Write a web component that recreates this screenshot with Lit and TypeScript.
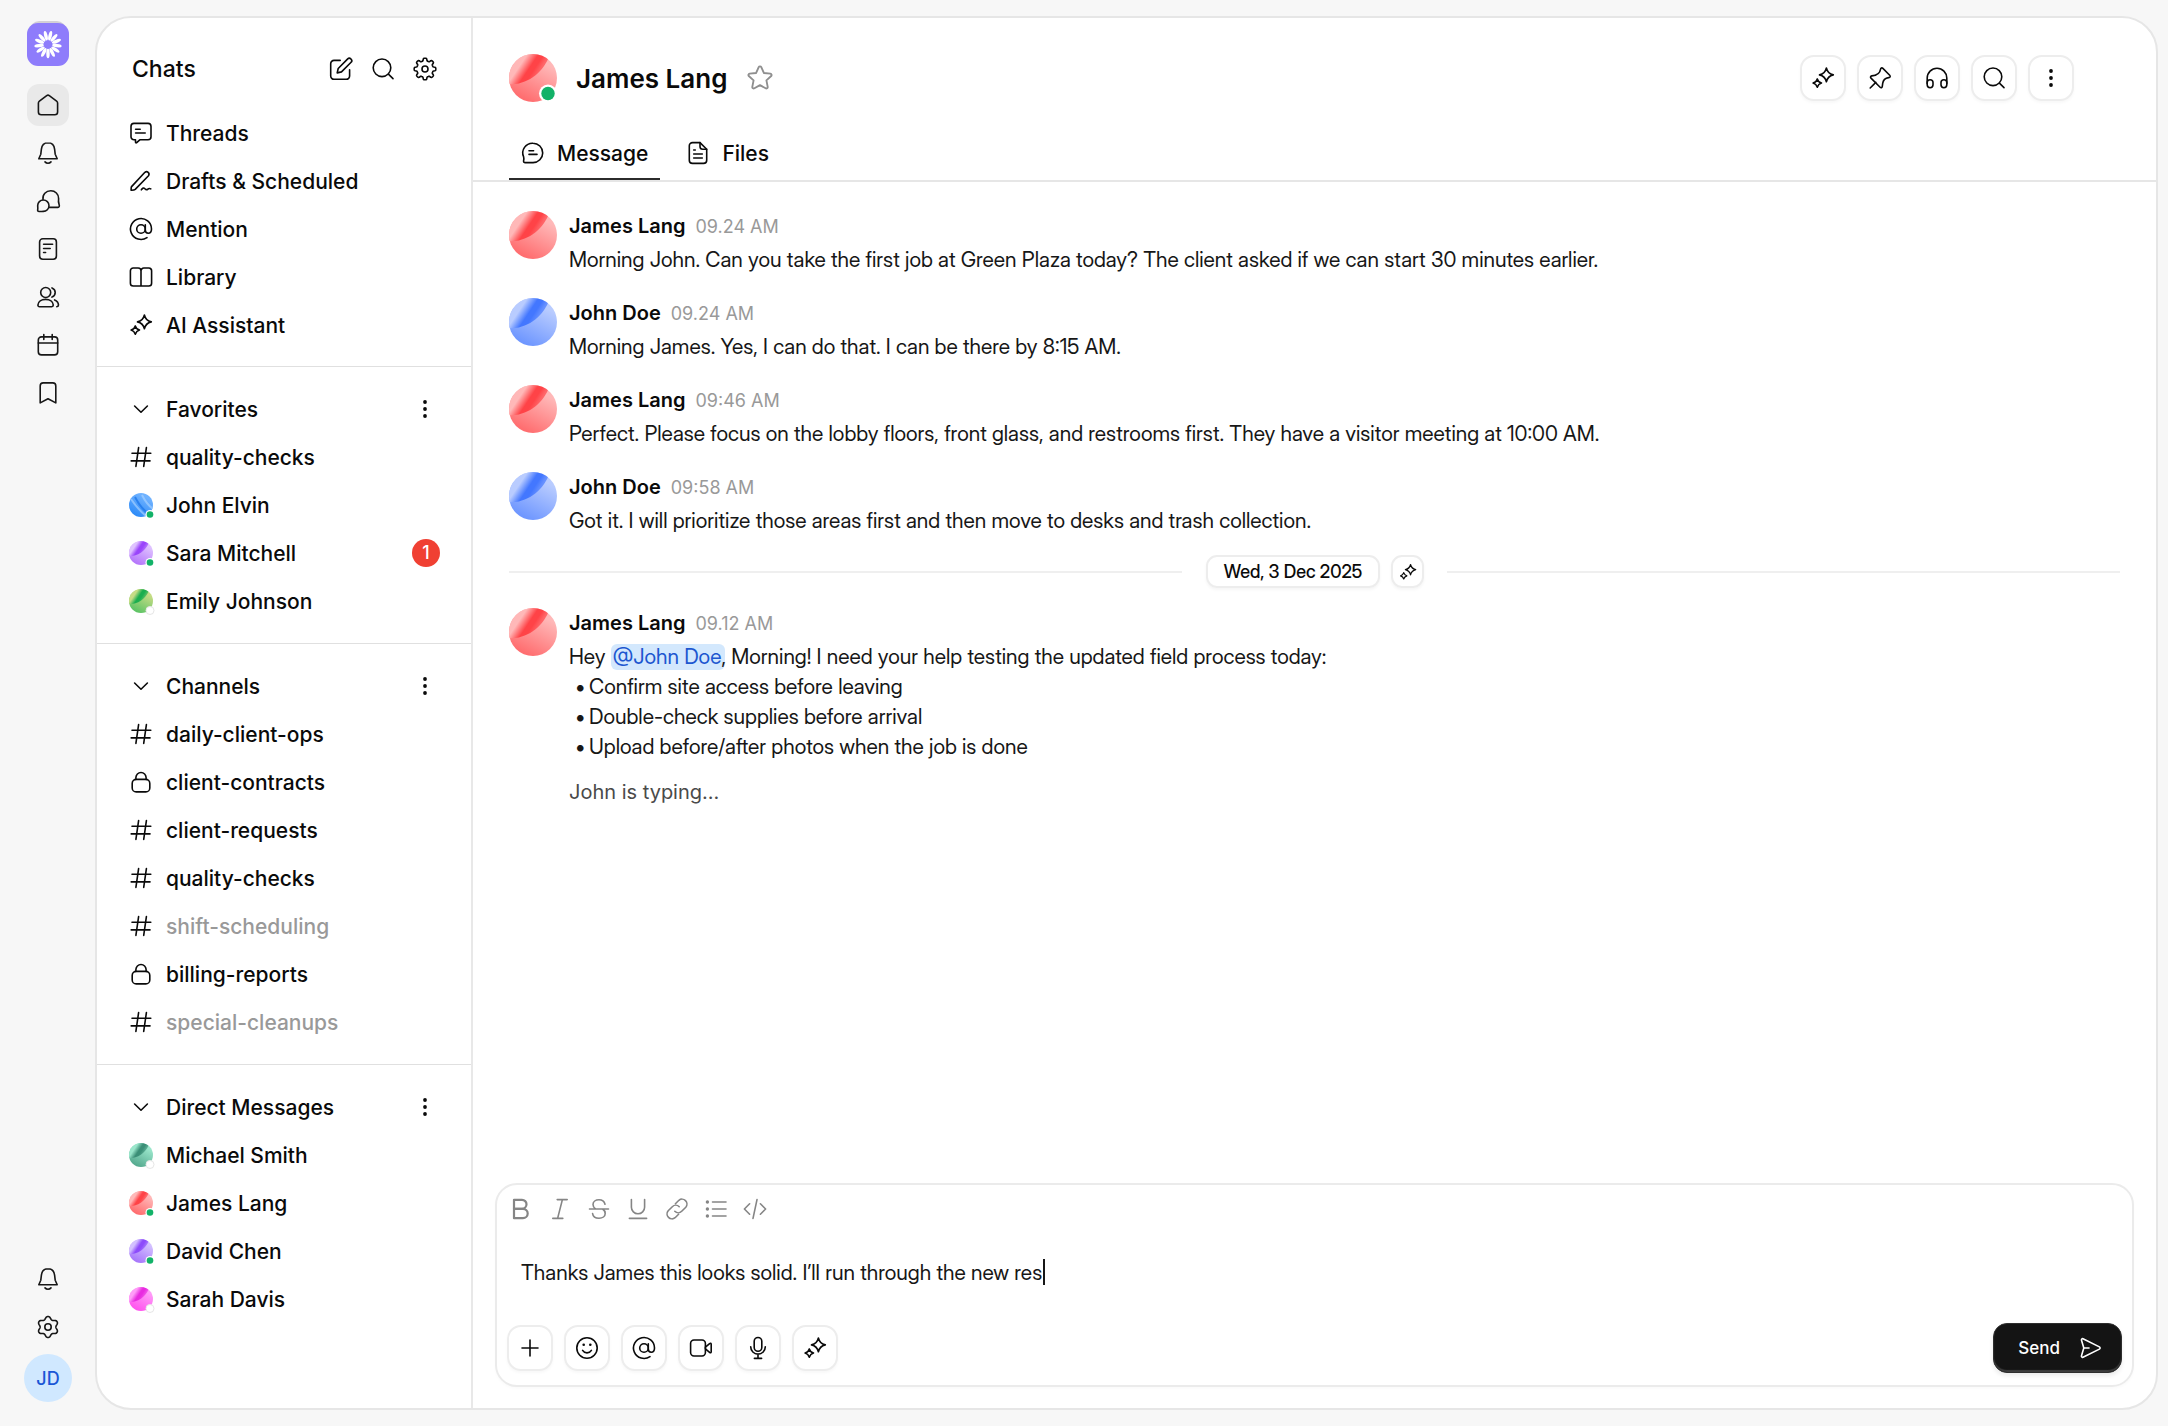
import { LitElement, html, css, svg, nothing } from "lit";
import { customElement, property, state } from "lit/decorators.js";
import { classMap } from "lit/directives/class-map.js";

/** Outline of a gear with soft teeth, as a closed path round (12, 12). */
function gearPath(teeth: number, radius: number, depth: number, sharpness: number): string {
  const steps = 144;
  const points: string[] = [];
  for (let i = 0; i < steps; i++) {
    const angle = (i / steps) * Math.PI * 2;
    const wave = Math.tanh(sharpness * Math.cos(teeth * angle)) / Math.tanh(sharpness);
    const r = radius + depth * wave;
    points.push(`${(12 + r * Math.sin(angle)).toFixed(2)} ${(12 - r * Math.cos(angle)).toFixed(2)}`);
  }
  return `M${points.join("L")}Z`;
}

const dot = (x: number, y: number, r: number) =>
  svg`<circle cx=${x} cy=${y} r=${r} fill="currentColor" stroke="none"/>`;

const ICONS: Record<string, unknown> = {
  home: svg`<path d="M10.7 2.6a2.2 2.2 0 0 1 2.6 0l7.3 5.5a2.6 2.6 0 0 1 1 2V19a2.8 2.8 0 0 1-2.8 2.8H5.2A2.8 2.8 0 0 1 2.4 19v-8.9a2.6 2.6 0 0 1 1-2z"/>`,
  bell: svg`<path d="M12 1.8c-3.8 0-6.2 2.7-6.6 6.4l-.6 5L2.8 17.7h18.4l-2-4.5-.6-5C18.2 4.5 15.8 1.8 12 1.8z"/><path d="M9 20.9c.8.9 1.8 1.3 3 1.3s2.2-.4 3-1.3"/>`,
  chats: svg`<path d="M7 10.4C6.3 5.4 10 1.8 14.8 1.8c4.5 0 7.8 3.3 7.8 7.6v.8c-.4 1.8 0 3.6.5 5.2.6 1.8.1 2.9-1.2 3L13.4 18.4"/><path d="M7.3 11a5.7 5.7 0 0 1 0 11.4c-1.4 0-2 .1-4.2.1-1.2 0-1.7-.6-1.4-1.7.3-1.5 0-2.6 0-4.2A5.6 5.6 0 0 1 7.3 11z"/>`,
  note: svg`<rect x="3.6" y="1.8" width="16.8" height="20.4" rx="3.2"/><path d="M7.6 7.3h9M7.6 11.5h6.6M7.6 15.5h2"/>`,
  users: svg`<circle cx="9.7" cy="7.5" r="5"/><path d="M1.9 20.1c.2-3.4 3.5-5.7 7.7-5.7s7.5 2.3 7.7 5.7c0 1-.6 1.6-1.6 1.6H3.5c-1 0-1.6-.6-1.6-1.6z"/><path d="M16 2.9c1.9.8 3.2 2.5 3.2 4.6S17.9 11.3 16 12.1M18.6 14.9c2.3.9 3.8 2.7 3.9 5.2 0 1-.5 1.5-1.7 1.6"/>`,
  calendar: svg`<rect x="2.3" y="3.9" width="19.4" height="18" rx="3.2"/><path d="M2.3 10h19.4M7.8 1.5v5M16.2 1.5v5"/>`,
  bookmark: svg`<path d="M4.2 4.9a3 3 0 0 1 3-3h9.6a3 3 0 0 1 3 3v17L12 17.7l-7.8 4.2z"/>`,
  gear: svg`<path d=${gearPath(6, 9.2, 1.3, 0.8)}/><circle cx="12" cy="12" r="3.2"/>`,
  cog: svg`<path d=${gearPath(8, 9.5, 1.3, 2.6)}/><circle cx="12" cy="12" r="3"/>`,
  compose: svg`<path d="M11.2 3.4H5A3.3 3.3 0 0 0 1.7 6.7V19A3.3 3.3 0 0 0 5 22.3h12.3a3.3 3.3 0 0 0 3.3-3.3v-6.3"/><path d="M18.7 1.9a2.2 2.2 0 0 1 3.1 0l.3.3a2.2 2.2 0 0 1 0 3.1L12.5 14.9l-4.3 1 1-4.4z"/>`,
  search: svg`<circle cx="11" cy="10.8" r="8.8"/><path d="m17.4 17.2 4.6 4.4"/>`,
  thread: svg`<path d="M5 2.4h14a3 3 0 0 1 3 3v10.4a3 3 0 0 1-3 3h-8.2L7.7 21.7c-.6.5-1.2.2-1.2-.6v-2.3H5a3 3 0 0 1-3-3V5.4a3 3 0 0 1 3-3z"/><path d="M6.6 8.3h4.6M6.6 12h9.6"/>`,
  draft: svg`<path d="M2.6 17.6 15.9 3.3a2.5 2.5 0 0 1 3.6 3.4L6.2 20.4c-.8.7-1.8 1-4.1.9.1-1.9-.1-2.9.5-3.7z"/><path d="M12.3 20.9c1.2-2.1 2.5-2.3 3.6-1.1s2 1.2 3 .3 1.8-.9 2.9-.2"/>`,
  at: svg`<circle cx="12" cy="12" r="4.3"/><path d="M16.3 7.7V13c0 2 1.1 3.2 2.9 3.2s3.3-1.5 3.3-4.2A10.5 10.5 0 1 0 18 20.6"/>`,
  book: svg`<path d="M12 21V5.8A2.8 2.8 0 0 0 9.2 3H4.2a2.8 2.8 0 0 0-2.8 2.8v12.4A2.8 2.8 0 0 0 4.2 21h15.6a2.8 2.8 0 0 0 2.8-2.8V5.8A2.8 2.8 0 0 0 19.8 3h-5A2.8 2.8 0 0 0 12 5.8"/>`,
  sparkles: svg`<path d="M15.4 2q1.3 5.6 6.9 6.9-5.6 1.3-6.9 6.9-1.3-5.6-6.9-6.9 5.6-1.3 6.9-6.9z"/><path d="M6.3 12.9q1 3.3 4.2 4.2-3.2 1-4.2 4.2-1-3.2-4.2-4.2 3.2-.9 4.2-4.2z"/>`,
  chevron: svg`<path d="m5.6 9 6.4 6.2L18.4 9"/>`,
  more: [dot(12, 5, 1.9), dot(12, 12, 1.9), dot(12, 19, 1.9)],
  hash: svg`<path d="M9.6 2.6 6.9 21.4M17.4 2.6l-2.7 18.8M3 8.2h18.8M2.2 15.9H21"/>`,
  lock: svg`<rect x="3.2" y="9.4" width="17.6" height="12.5" rx="4"/><path d="M6.9 9.4V7.6a5.1 5.1 0 0 1 10.2 0v1.8"/>`,
  star: svg`<path d="M10.9 2.7a1.2 1.2 0 0 1 2.2 0l2.2 5 5.6.6a1.2 1.2 0 0 1 .7 2l-4.1 3.7 1.1 5.6a1.2 1.2 0 0 1-1.8 1.2L12 18.1l-4.8 2.7a1.2 1.2 0 0 1-1.8-1.2L6.5 14 2.4 10.3a1.2 1.2 0 0 1 .7-2l5.6-.6z"/>`,
  message: svg`<path d="M12 2.2a9.7 9.7 0 1 1 0 19.4H4.2c-1.2 0-1.8-.7-1.6-1.8.4-1.5.4-2.5 0-4A9.7 9.7 0 0 1 12 2.2z"/><path d="M8 9.7h4.6M8 13.4h8"/>`,
  file: svg`<path d="M14 1.6H6.5a3.2 3.2 0 0 0-3.2 3.2v14.4a3.2 3.2 0 0 0 3.2 3.2h11a3.2 3.2 0 0 0 3.2-3.2V8.2z"/><path d="M14 1.6v3.9a2.8 2.8 0 0 0 2.8 2.8h3.9M7.7 9h1.6M7.7 13h8.6M7.7 17h8.6"/>`,
  pin: svg`<path d="M12.5 3.4c.2-1.5 1.4-2 2.4-1l6.8 6.8c1 1 .5 2.2-1 2.4-3.5.5-5.6 2.5-6 5.8l-.4 3c-.2 1.3-1.3 1.7-2.2.8L3 12.1c-.9-.9-.5-2 .8-2.2 4.7-.5 8.1-2.2 8.7-6.5z"/><path d="M7.8 16.4 2.2 22"/>`,
  headphones: svg`<path d="M2.2 17.6v-5.5a9.8 9.8 0 0 1 19.6 0v5.5"/><rect x="2.2" y="13.7" width="5.8" height="8" rx="2.9"/><rect x="16" y="13.7" width="5.8" height="8" rx="2.9"/>`,
  plus: svg`<path d="M12 4v16M4 12h16"/>`,
  smile: [
    svg`<circle cx="12" cy="12" r="10.2"/><path d="M7.6 14.4c1 1.7 2.5 2.5 4.4 2.5s3.4-.8 4.4-2.5"/>`,
    dot(8.7, 8.8, 1.3),
    dot(15.3, 8.8, 1.3),
  ],
  video: svg`<rect x="1.6" y="4" width="14.8" height="16" rx="3.4"/><path d="m16.4 11.2 4.2-3.6c.9-.7 1.6-.3 1.6.7v7.4c0 1-.7 1.4-1.6.7l-4.2-3.6z"/>`,
  mic: svg`<rect x="8.2" y="1.5" width="7.6" height="13.8" rx="3.8"/><path d="M4.7 10.8a7.3 7.3 0 0 0 14.6 0M12 18.2v4.2M8.4 22.4h7.2"/>`,
  send: svg`<path d="M3.5 4.2c-.3-1 .6-1.8 1.5-1.4l16.4 8.1c.9.5.9 1.7 0 2.2L5 21.2c-.9.4-1.8-.4-1.5-1.4L5.8 12z"/><path d="M5.8 12H11"/>`,
  bold: svg`<g stroke-width="2.2"><path d="M5 2.8h8a4.5 4.5 0 0 1 0 9H5z"/><path d="M5 11.8h9a4.7 4.7 0 0 1 0 9.4H5z"/></g>`,
  italic: svg`<path d="M9.2 2.6h10M4.8 21.4h10M14.4 2.6 9.6 21.4"/>`,
  strike: svg`<path d="M2.5 12h19M18 7.2c-.7-2.8-3-4.4-6-4.4-3.4 0-6 1.8-6 4.6 0 1.8.8 3.2 2.6 4.6M15.6 12c1.8 1.2 2.6 2.6 2.6 4.4 0 2.9-2.6 4.8-6.2 4.8s-6-1.8-6.4-4.6"/>`,
  underline: svg`<path d="M5.4 2.6v7.6a6.6 6.6 0 0 0 13.2 0V2.6M3.4 21.4h17.2"/>`,
  link: svg`<path d="m10.4 6.8 3.5-3.5a4.9 4.9 0 0 1 6.9 6.9l-4.1 4.1a4.9 4.9 0 0 1-6.9 0"/><path d="m13.6 17.2-3.5 3.5a4.9 4.9 0 0 1-6.9-6.9l4.1-4.1a4.9 4.9 0 0 1 6.9 0"/>`,
  list: [
    svg`<path d="M8.5 5H22M8.5 12H22M8.5 19H22"/>`,
    dot(3.4, 5, 1.7),
    dot(3.4, 12, 1.7),
    dot(3.4, 19, 1.7),
  ],
  code: svg`<path d="m6.6 6.8-5.2 5.2 5.2 5.2M17.4 6.8l5.2 5.2-5.2 5.2M14 2.6l-4 18.8"/>`,
};

@customElement("chat-icon")
export class ChatIcon extends LitElement {
  static styles = css`
    :host {
      display: inline-flex;
      flex: none;
      width: 24px;
      height: 24px;
    }
    :host([size="small"]) {
      width: 18px;
      height: 18px;
    }
    :host([size="large"]) {
      width: 28px;
      height: 28px;
    }
    svg {
      width: 100%;
      height: 100%;
      overflow: visible;
    }
  `;

  @property() name = "";

  render() {
    return html`<svg
      viewBox="0 0 24 24"
      fill="none"
      stroke="currentColor"
      stroke-width="1.6"
      stroke-linecap="round"
      stroke-linejoin="round"
      aria-hidden="true"
    >${ICONS[this.name]}</svg>`;
  }
}

interface Tone {
  pale: string;
  base: string;
  deep: string;
}

const TONES: Record<string, Tone> = {
  red: { pale: "#ffb8b8", base: "#ff6e70", deep: "#ff4347" },
  blue: { pale: "#b9ccff", base: "#6f97ff", deep: "#4377ff" },
  violet: { pale: "#dfc2ff", base: "#b678fb", deep: "#9a45fb" },
  indigo: { pale: "#d3c0ff", base: "#a878fb", deep: "#8d4bfb" },
  green: { pale: "#c6dc85", base: "#5fc466", deep: "#1cae4f" },
  teal: { pale: "#9ae6cb", base: "#57ab90", deep: "#3b8f77" },
  pink: { pale: "#ff9cf8", base: "#ff55ee", deep: "#e82be0" },
  sky: { pale: "#6fb2ff", base: "#2f8cf8", deep: "#3a80e8" },
};

@customElement("user-avatar")
export class UserAvatar extends LitElement {
  static styles = css`
    :host {
      display: inline-flex;
      flex: none;
      width: 24px;
      height: 24px;
    }
    :host([size="large"]) {
      width: 48px;
      height: 48px;
    }
    svg {
      width: 100%;
      height: 100%;
      overflow: visible;
    }
  `;

  @property() tone = "red";
  @property() size = "small";
  @property() status = "";

  private renderStatus() {
    if (!this.status) return nothing;
    if (this.size === "large") {
      return svg`<circle cx="39" cy="39.5" r="9" fill="#fff"/><circle cx="39" cy="39.5" r="6.7" fill="#12b268"/>`;
    }
    return this.status === "online"
      ? svg`<circle cx="42" cy="43" r="9" fill="#fff"/><circle cx="42" cy="43" r="6.6" fill="#12b268"/>`
      : svg`<circle cx="42" cy="43" r="8" fill="#fff" stroke="#e6e6e6" stroke-width="2"/>`;
  }

  private renderShade() {
    return this.tone === "sky"
      ? svg`<g fill="none" stroke-width="4" clip-path="url(#disc)">
          <path d="M4 12C12 24 22 36 34 46M26 4C32 16 40 26 48 32" stroke="#a9d2ff" stroke-opacity=".65"/>
          <path d="M12 8C20 24 28 34 40 42" stroke="#1f78ea" stroke-opacity=".8"/>
        </g>`
      : svg`<path d="M-2 30.5C17 31 32 21 39.500 4L24-6-2-2z" fill="url(#deep)" clip-path="url(#disc)"/>`;
  }

  render() {
    const tone = TONES[this.tone];
    return html`<svg viewBox="0 0 48 48" aria-hidden="true">
      <defs>
        <clipPath id="disc"><circle cx="24" cy="24" r="24" /></clipPath>
        <linearGradient id="base" x1=".85" y1=".25" x2=".45" y2="1">
          <stop offset="0" stop-color=${tone.pale} />
          <stop offset="1" stop-color=${tone.base} />
        </linearGradient>
        <linearGradient id="deep" gradientUnits="userSpaceOnUse" x1="7" y1="6" x2="28" y2="20">
          <stop offset="0" stop-color=${tone.pale} />
          <stop offset=".25" stop-color=${tone.pale} />
          <stop offset=".62" stop-color=${tone.deep} />
          <stop offset=".8" stop-color=${tone.deep} />
          <stop offset="1" stop-color=${tone.deep} stop-opacity=".7" />
        </linearGradient>
      </defs>
      <circle cx="24" cy="24" r="24" fill="url(#base)" />
      ${this.renderShade()} ${this.renderStatus()}
    </svg>`;
  }
}

interface Entry {
  label: string;
  icon?: string;
  tone?: string;
  status?: string;
  muted?: boolean;
  unread?: number;
}

interface Group {
  title: string;
  entries: Entry[];
}

const SHORTCUTS: Entry[] = [
  { label: "Threads", icon: "thread" },
  { label: "Drafts & Scheduled", icon: "draft" },
  { label: "Mention", icon: "at" },
  { label: "Library", icon: "book" },
  { label: "AI Assistant", icon: "sparkles" },
];

const GROUPS: Group[] = [
  {
    title: "Favorites",
    entries: [
      { label: "quality-checks", icon: "hash" },
      { label: "John Elvin", tone: "sky", status: "online" },
      { label: "Sara Mitchell", tone: "violet", status: "online", unread: 1 },
      { label: "Emily Johnson", tone: "green", status: "offline" },
    ],
  },
  {
    title: "Channels",
    entries: [
      { label: "daily-client-ops", icon: "hash" },
      { label: "client-contracts", icon: "lock" },
      { label: "client-requests", icon: "hash" },
      { label: "quality-checks", icon: "hash" },
      { label: "shift-scheduling", icon: "hash", muted: true },
      { label: "billing-reports", icon: "lock" },
      { label: "special-cleanups", icon: "hash", muted: true },
    ],
  },
  {
    title: "Direct Messages",
    entries: [
      { label: "Michael Smith", tone: "teal", status: "offline" },
      { label: "James Lang", tone: "red", status: "online" },
      { label: "David Chen", tone: "indigo", status: "online" },
      { label: "Sarah Davis", tone: "pink", status: "offline" },
    ],
  },
];

@customElement("chat-sidebar")
export class ChatSidebar extends LitElement {
  static styles = css`
    :host {
      display: block;
      border-right: 2px solid #e8e8e8;
    }
    * {
      box-sizing: border-box;
    }
    button {
      display: inline-flex;
      padding: 0;
      border: 0;
      background: none;
      color: inherit;
      font: inherit;
      cursor: pointer;
    }
    .head {
      display: flex;
      align-items: center;
      gap: 18px;
      height: 48px;
      margin-top: 27px;
      padding: 0 34px 0 35px;
    }
    h1 {
      flex: 1;
      margin: 0;
      font-size: 23px;
      font-weight: 500;
      line-height: 32px;
    }
    .section {
      padding: 18px 0;
      border-bottom: 1px solid #e0e0e0;
    }
    .section.shortcuts {
      padding: 16px 0 17px;
    }
    .section:last-child {
      border-bottom: 0;
    }
    .row {
      display: flex;
      align-items: center;
      gap: 13px;
      height: 48px;
      padding: 0 34px 0 32px;
      color: inherit;
      text-decoration: none;
    }
    .row.counted {
      padding-right: 31px;
    }
    .label {
      flex: 1;
      margin: 0;
      padding-top: 1px;
      font-size: 21px;
      font-weight: 500;
      line-height: 28px;
      white-space: nowrap;
    }
    .toggle {
      flex: 1;
      align-items: center;
      gap: 13px;
      text-align: left;
    }
    .muted {
      color: #999;
    }
    .count {
      min-width: 28px;
      border-radius: 14px;
      background: #f04033;
      color: #fff;
      font-size: 18px;
      font-weight: 500;
      line-height: 28px;
      text-align: center;
    }
    ul {
      margin: 0;
      padding: 0;
      list-style: none;
    }
  `;

  @state() private closed = new Set<string>();

  private toggle(title: string) {
    const next = new Set(this.closed);
    if (!next.delete(title)) next.add(title);
    this.closed = next;
  }

  private renderEntry(entry: Entry) {
    return html`<li>
      <a class=${classMap({ row: true, counted: !!entry.unread })} href="#">
        ${entry.icon
          ? html`<chat-icon name=${entry.icon}></chat-icon>`
          : html`<user-avatar tone=${entry.tone!} status=${entry.status!}></user-avatar>`}
        <span class=${classMap({ label: true, muted: !!entry.muted })}>${entry.label}</span>
        ${entry.unread ? html`<span class="count">${entry.unread}</span>` : nothing}
      </a>
    </li>`;
  }

  private renderGroup(group: Group) {
    const open = !this.closed.has(group.title);
    return html`<section class="section">
      <div class="row">
        <button class="toggle" aria-expanded=${open} @click=${() => this.toggle(group.title)}>
          <chat-icon name="chevron"></chat-icon>
          <span class="label">${group.title}</span>
        </button>
        <button aria-label="${group.title} options"><chat-icon name="more"></chat-icon></button>
      </div>
      ${open ? html`<ul>${group.entries.map((entry) => this.renderEntry(entry))}</ul>` : nothing}
    </section>`;
  }

  render() {
    return html`
      <header class="head">
        <h1>Chats</h1>
        <button aria-label="New chat"><chat-icon name="compose"></chat-icon></button>
        <button aria-label="Search chats"><chat-icon name="search"></chat-icon></button>
        <button aria-label="Chat settings"><chat-icon name="cog"></chat-icon></button>
      </header>
      <nav class="section shortcuts" aria-label="Shortcuts">
        <ul>${SHORTCUTS.map((entry) => this.renderEntry(entry))}</ul>
      </nav>
      ${GROUPS.map((group) => this.renderGroup(group))}
    `;
  }
}

@customElement("nav-rail")
export class NavRail extends LitElement {
  static styles = css`
    :host {
      display: flex;
      flex-direction: column;
      align-items: center;
      padding: 21px 0 24px 1px;
    }
    * {
      box-sizing: border-box;
    }
    .logo {
      display: flex;
      width: 42px;
      height: 45px;
      margin-bottom: 15px;
    }
    nav,
    .foot {
      display: flex;
      flex-direction: column;
      align-items: center;
    }
    nav {
      flex: 1;
    }
    .item {
      display: flex;
      align-items: center;
      justify-content: center;
      width: 42px;
      height: 42px;
      margin: 3px 0;
      border-radius: 12px;
      color: #171717;
    }
    .item.current {
      background: #e9e9e9;
    }
    .profile {
      width: 48px;
      height: 48px;
      margin-top: 3px;
      padding: 0;
      border: 0;
      border-radius: 50%;
      background: #d0e8ff;
      color: #1a56d6;
      font: inherit;
      font-size: 18px;
      font-weight: 500;
      cursor: pointer;
    }
  `;

  render() {
    const items = [
      ["home", "Home"],
      ["bell", "Activity"],
      ["chats", "Chats"],
      ["note", "Notes"],
      ["users", "People"],
      ["calendar", "Calendar"],
      ["bookmark", "Saved"],
    ];
    const petals = Array.from({ length: 13 }, (_, i) => 180 + (i * 360) / 13);
    return html`
      <a class="logo" href="#" aria-label="Workspace">
        <svg viewBox="0 0 42 45" width="42" height="45" aria-hidden="true">
          <rect x="3" y="0" width="36" height="20" rx="9" fill="#d3d0d6" />
          <rect x="0" y="2" width="42" height="43" rx="11" fill="#8e7cfb" />
          <g fill="#fff">
            ${petals.map(
              (angle) =>
                svg`<ellipse cx="21" cy="14.5" rx="1.7" ry="4.8" transform="rotate(${angle} 21 23.5)"/>`,
            )}
          </g>
        </svg>
      </a>
      <nav aria-label="Main">
        ${items.map(
          ([icon, label], index) => html`<a
            class=${classMap({ item: true, current: index === 0 })}
            href="#"
            aria-label=${label}
            ><chat-icon name=${icon}></chat-icon
          ></a>`,
        )}
      </nav>
      <div class="foot">
        <a class="item" href="#" aria-label="Notifications"><chat-icon name="bell"></chat-icon></a>
        <a class="item" href="#" aria-label="Settings"><chat-icon name="gear"></chat-icon></a>
        <button class="profile">JD</button>
      </div>
    `;
  }
}

interface Message {
  author: string;
  tone: string;
  time: string;
  body: unknown;
  typing?: string;
}

const EARLIER: Message[] = [
  {
    author: "James Lang",
    tone: "red",
    time: "09.24 AM",
    body: "Morning John. Can you take the first job at Green Plaza today? The client asked if we can start 30 minutes earlier.",
  },
  {
    author: "John Doe",
    tone: "blue",
    time: "09.24 AM",
    body: "Morning James. Yes, I can do that. I can be there by 8:15 AM.",
  },
  {
    author: "James Lang",
    tone: "red",
    time: "09:46 AM",
    body: "Perfect. Please focus on the lobby floors, front glass, and restrooms first. They have a visitor meeting at 10:00 AM.",
  },
  {
    author: "John Doe",
    tone: "blue",
    time: "09:58 AM",
    body: "Got it. I will prioritize those areas first and then move to desks and trash collection.",
  },
];

const LATEST: Message = {
  author: "James Lang",
  tone: "red",
  time: "09.12 AM",
  body: html`Hey <a class="mention" href="#">@John Doe</a>, Morning! I need your help testing the updated
    field process today:
    <ul class="points">
      <li>Confirm site access before leaving</li>
      <li>Double-check supplies before arrival</li>
      <li>Upload before/after photos when the job is done</li>
    </ul>`,
  typing: "John is typing...",
};

@customElement("chat-conversation")
export class ChatConversation extends LitElement {
  static styles = css`
    :host {
      display: flex;
      flex-direction: column;
      min-width: 0;
    }
    * {
      box-sizing: border-box;
    }
    button {
      display: inline-flex;
      align-items: center;
      justify-content: center;
      padding: 0;
      border: 0;
      background: none;
      color: inherit;
      font: inherit;
      cursor: pointer;
    }
    .head {
      padding: 35px 36px 0;
      border-bottom: 2px solid #e6e6e6;
    }
    .title {
      display: flex;
      align-items: center;
      gap: 19px;
      height: 50px;
      padding-right: 46px;
    }
    h2 {
      margin: 0;
      padding-top: 2px;
      font-size: 26px;
      font-weight: 600;
      line-height: 36px;
    }
    .star {
      color: #8f8f8f;
    }
    .actions {
      display: flex;
      gap: 11px;
      margin-left: auto;
    }
    .tool {
      width: 46px;
      height: 46px;
      border: 2px solid #ededed;
      border-radius: 14px;
      background: #fff;
      box-shadow: 0 2px 3px rgba(0, 0, 0, 0.03);
    }
    .tabs {
      display: flex;
      gap: 14px;
      margin-top: 25px;
    }
    .tab {
      gap: 12px;
      height: 52px;
      padding: 0 12px;
      border-bottom: 2px solid transparent;
      font-size: 21px;
      font-weight: 500;
    }
    .tab[aria-selected="true"] {
      border-bottom-color: #2b2b2b;
    }
    .feed {
      display: flex;
      flex: 1;
      flex-direction: column;
      gap: 23px;
      padding: 29px 36px;
    }
    .message {
      display: flex;
      gap: 12px;
    }
    .content {
      flex: 1;
      min-width: 0;
    }
    .meta {
      display: flex;
      align-items: baseline;
      gap: 10px;
      margin-bottom: 3px;
      line-height: 30px;
    }
    h3 {
      margin: 0;
      font-size: 20px;
      font-weight: 600;
    }
    time {
      color: #999;
      font-size: 18px;
    }
    .text {
      color: #171717;
      font-family: "Inter Display", Inter, "Liberation Sans", sans-serif;
      font-size: 21px;
      line-height: 30px;
    }
    .mention {
      margin-right: -4px;
      padding: 0 4px 1px 2px;
      border-radius: 6px;
      background: #d3e8fd;
      color: #1d57d0;
      text-decoration: none;
    }
    .points {
      margin: 0;
      padding-left: 20px;
      list-style: none;
    }
    .points li::before {
      display: inline-block;
      width: 14px;
      margin-left: -14px;
      content: "•";
    }
    .typing {
      margin: 15px 0 0;
      color: #4a4a4a;
      font-size: 20px;
      line-height: 30px;
    }
    .day {
      display: flex;
      align-items: center;
      gap: 11px;
      margin: -4px 0 -3px;
    }
    .day::before,
    .day::after {
      flex: 1;
      height: 2px;
      background: #efefef;
      content: "";
    }
    .day::before {
      margin-right: 13px;
    }
    .day::after {
      margin-left: 12px;
    }
    .date {
      height: 33px;
      padding: 0 16px;
      border: 2px solid #ededed;
      border-radius: 11px;
      box-shadow: 0 2px 3px rgba(0, 0, 0, 0.04);
      font-family: "Inter Display", Inter, "Liberation Sans", sans-serif;
      font-size: 18px;
      font-weight: 500;
    }
    .recap {
      width: 33px;
      height: 33px;
      border: 2px solid #ededed;
      border-radius: 11px;
      box-shadow: 0 2px 3px rgba(0, 0, 0, 0.04);
    }
    .composer {
      display: flex;
      flex-direction: column;
      margin: 0 22px 21px;
      padding: 12px 10px;
      border: 2px solid #ebebeb;
      border-radius: 22px;
      box-shadow: 0 2px 3px rgba(0, 0, 0, 0.02);
    }
    .format {
      display: flex;
      gap: 17px;
      padding: 0 3px;
      color: #858585;
    }
    .format button {
      width: 22px;
      height: 24px;
    }
    .field {
      display: flex;
      align-items: center;
      height: 102px;
      padding: 0 14px;
    }
    .draft {
      field-sizing: content;
      max-width: 100%;
      height: 30px;
      padding: 0;
      border: 0;
      outline: 0;
      background: none;
      caret-color: transparent;
      color: #171717;
      font-family: "Inter Display", Inter, "Liberation Sans", sans-serif;
      font-size: 21px;
    }
    .caret {
      width: 2px;
      height: 26px;
      margin-left: 1px;
      background: #171717;
    }
    .foot {
      display: flex;
      align-items: center;
      gap: 11px;
    }
    .send {
      gap: 18px;
      height: 50px;
      margin-left: auto;
      padding: 0 19px 0 24px;
      border: 1px solid #2e2e2e;
      border-radius: 14px;
      background: #141414;
      box-shadow:
        inset 0 -2px 1px #3d3d3d,
        0 3px 4px rgba(0, 0, 0, 0.08);
      color: #fff;
      font-size: 17px;
      font-weight: 500;
    }
  `;

  @state() private tab = "Message";
  @state() private draft = "Thanks James this looks solid. I’ll run through the new res";

  private renderTool(icon: string, label: string) {
    return html`<button type="button" class="tool" aria-label=${label}>
      <chat-icon name=${icon}></chat-icon>
    </button>`;
  }

  private renderTab(name: string, icon: string) {
    return html`<button
      class="tab"
      role="tab"
      aria-selected=${this.tab === name}
      @click=${() => (this.tab = name)}
    >
      <chat-icon name=${icon}></chat-icon><span>${name}</span>
    </button>`;
  }

  private renderMessage(message: Message) {
    return html`<article class="message">
      <user-avatar tone=${message.tone} size="large"></user-avatar>
      <div class="content">
        <div class="meta">
          <h3>${message.author}</h3>
          <time>${message.time}</time>
        </div>
        <div class="text">${message.body}</div>
        ${message.typing ? html`<p class="typing">${message.typing}</p>` : nothing}
      </div>
    </article>`;
  }

  render() {
    const formats = [
      ["bold", "Bold"],
      ["italic", "Italic"],
      ["strike", "Strikethrough"],
      ["underline", "Underline"],
      ["link", "Link"],
      ["list", "Bulleted list"],
      ["code", "Code"],
    ];
    return html`
      <header class="head">
        <div class="title">
          <user-avatar tone="red" size="large" status="online"></user-avatar>
          <h2>James Lang</h2>
          <button class="star" aria-label="Add to favorites">
            <chat-icon name="star" size="large"></chat-icon>
          </button>
          <div class="actions">
            ${this.renderTool("sparkles", "Assistant")} ${this.renderTool("pin", "Pin")}
            ${this.renderTool("headphones", "Call")} ${this.renderTool("search", "Search")}
            ${this.renderTool("more", "More")}
          </div>
        </div>
        <div class="tabs" role="tablist">
          ${this.renderTab("Message", "message")}${this.renderTab("Files", "file")}
        </div>
      </header>
      <div class="feed">
        ${EARLIER.map((message) => this.renderMessage(message))}
        <div class="day">
          <button class="date">Wed, 3 Dec 2025</button>
          <button class="recap" aria-label="Summarize the day">
            <chat-icon name="sparkles" size="small"></chat-icon>
          </button>
        </div>
        ${this.renderMessage(LATEST)}
      </div>
      <form class="composer" @submit=${(event: Event) => event.preventDefault()}>
        <div class="format">
          ${formats.map(
            ([icon, label]) => html`<button type="button" aria-label=${label}>
              <chat-icon name=${icon}></chat-icon>
            </button>`,
          )}
        </div>
        <div class="field">
          <input
            class="draft"
            type="text"
            aria-label="Message"
            .value=${this.draft}
            @input=${(event: Event) => (this.draft = (event.target as HTMLInputElement).value)}
          /><span class="caret"></span>
        </div>
        <div class="foot">
          ${this.renderTool("plus", "Attach")} ${this.renderTool("smile", "Emoji")}
          ${this.renderTool("at", "Mention someone")} ${this.renderTool("video", "Record video")}
          ${this.renderTool("mic", "Record audio")} ${this.renderTool("sparkles", "Write with AI")}
          <button class="send" type="submit">
            <span>Send</span><chat-icon name="send"></chat-icon>
          </button>
        </div>
      </form>
    `;
  }
}

@customElement("app-root")
export class AppRoot extends LitElement {
  static styles = css`
    :host {
      display: grid;
      grid-template-columns: 95px minmax(0, 1fr);
      box-sizing: border-box;
      min-height: 100vh;
      padding-right: 10px;
      background: #f7f7f7;
      color: #0a0a0a;
      font-family: Inter, "Liberation Sans", sans-serif;
    }
    .panel {
      display: grid;
      grid-template-columns: 376px minmax(0, 1fr);
      margin: 16px 0;
      overflow: hidden;
      border: 2px solid #e6e6e6;
      border-radius: 36px;
      background: #fff;
    }
  `;

  render() {
    return html`
      <nav-rail></nav-rail>
      <main class="panel">
        <chat-sidebar></chat-sidebar>
        <chat-conversation></chat-conversation>
      </main>
    `;
  }
}
